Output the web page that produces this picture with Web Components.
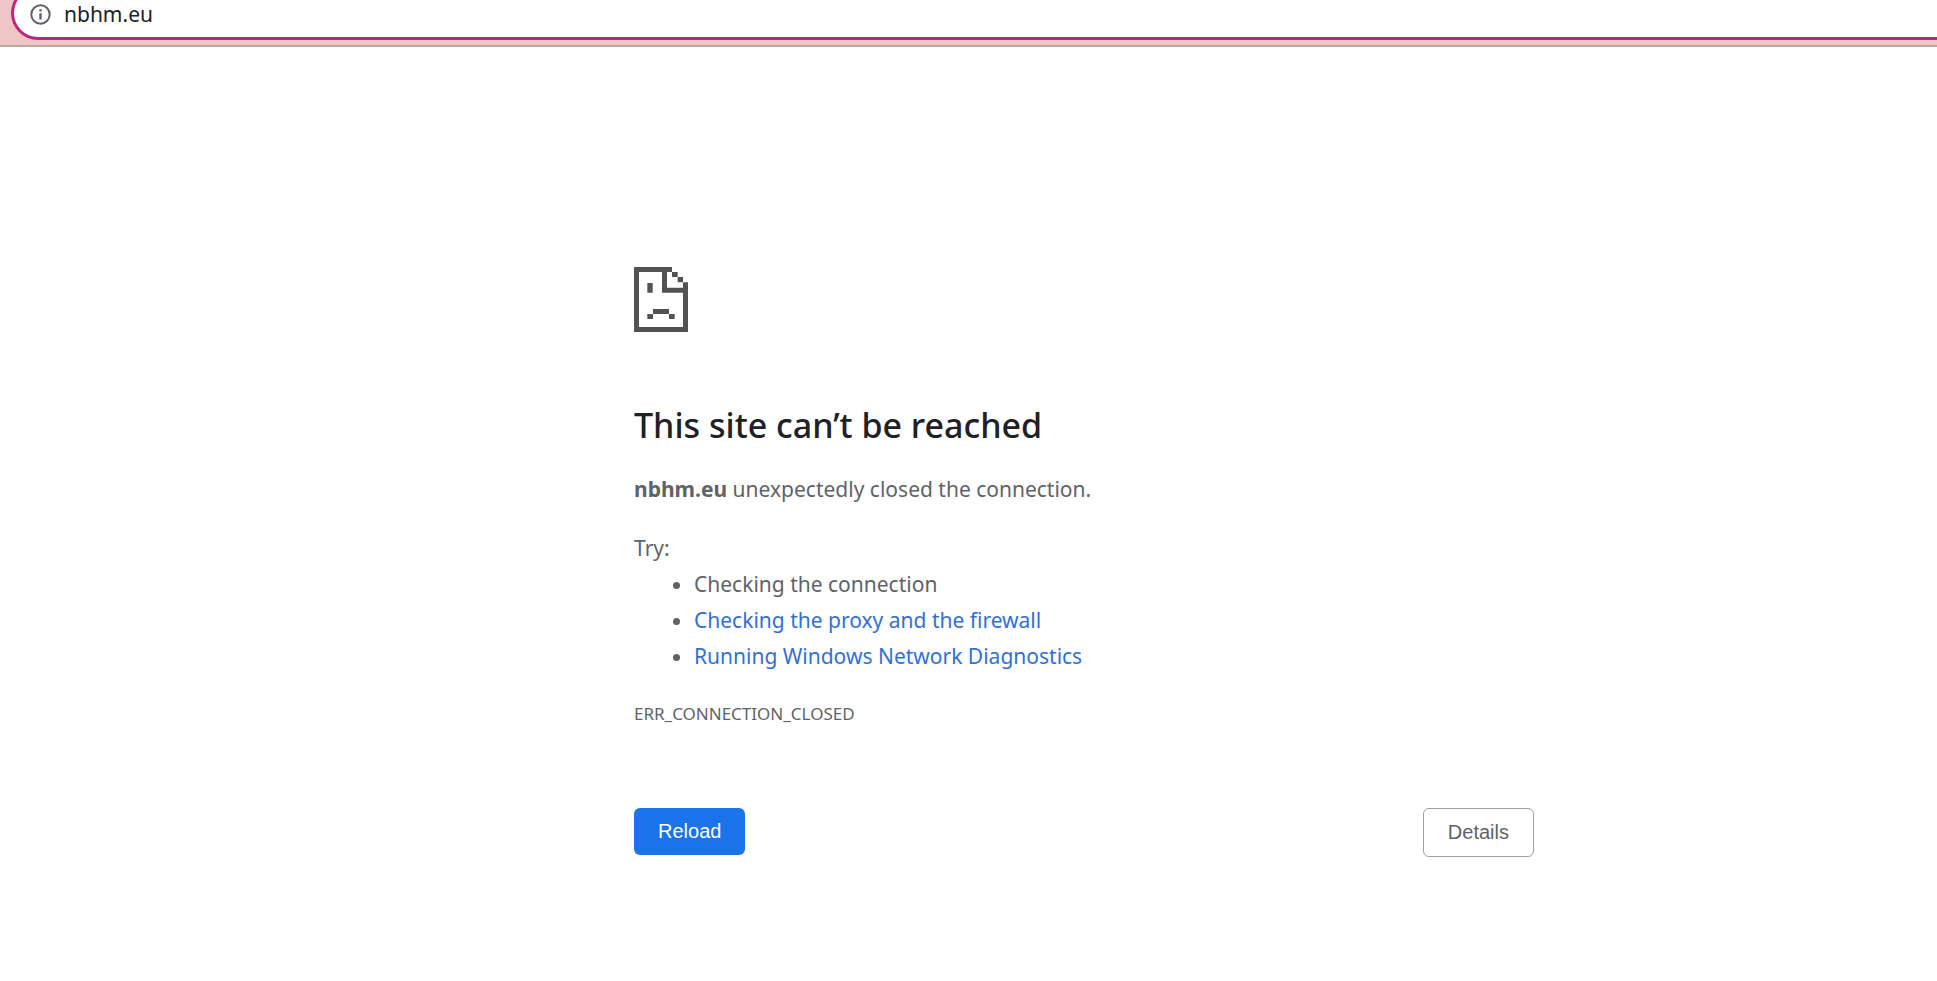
<!DOCTYPE html>
<html lang="en">
<head>
<meta charset="utf-8">
<title>nbhm.eu</title>
<style>
body { margin: 0; background: #fff; font-family: "Noto Sans", "Open Sans", sans-serif; color: #5f6368; }
</style>
</head>
<body>
<address-bar value="nbhm.eu"></address-bar>
<error-page>
  <sad-file slot="icon"></sad-file>
  <span slot="title">This site can’t be reached</span>
  <strong slot="host">nbhm.eu</strong>
  <span slot="summary">unexpectedly closed the connection.</span>
  <suggestion-list slot="suggestions"></suggestion-list>
  <span slot="code">ERR_CONNECTION_CLOSED</span>
  <action-button slot="actions" kind="primary">Reload</action-button>
  <action-button slot="actions" kind="secondary">Details</action-button>
</error-page>
<script>
class BaseElement extends HTMLElement {
  constructor() {
    super();
    this.attachShadow({ mode: "open" }).innerHTML = this.constructor.markup;
  }
}

class AddressBar extends BaseElement {
  static markup = `
    <style>
      :host { display: flex; box-sizing: border-box; height: 47px; padding: 0 0 5px 11px; background: #efc6c5; border-bottom: 2px solid #bda69b; overflow: hidden; }
      .field { box-sizing: border-box; display: flex; align-items: center; gap: 13px; flex: 1; height: 54px; margin-top: -14px; padding: 2px 0 0 16px; background: #fff; border: solid #bd2380; border-width: 3px 0 3px 3px; border-radius: 27px 0 0 27px; }
      svg { width: 21px; height: 21px; flex: none; }
      input { flex: 1; min-width: 0; height: 30px; padding: 0; border: 0; outline: 0; background: none; color: #202124; font: 21px/30px "Noto Sans", "Open Sans", sans-serif; }
    </style>
    <div class="field">
      <svg viewBox="0 0 21 21" aria-hidden="true"><circle cx="10.5" cy="10.5" r="9.2" fill="none" stroke="#5f6368" stroke-width="2"/><path d="M9.3 5.2h2.4v2.2h-2.4zM9.3 9.2h2.4v6.4h-2.4z" fill="#5f6368"/></svg>
      <input type="text" aria-label="Address">
    </div>`;
  connectedCallback() {
    this.shadowRoot.querySelector("input").value = this.getAttribute("value");
  }
}

class SadFile extends BaseElement {
  static markup = `
    <style>
      :host { display: block; }
      svg { display: block; width: 54px; height: 65px; }
    </style>
    <svg viewBox="0 0 162 195" fill="#525252" aria-hidden="true">
      <path d="M0 0H114V15H99V62H147V46H162V195H0zM15 15V180H147V77H84V15z" fill-rule="evenodd"/>
      <path d="M114 15h17v15h-17zM131 30h16v16h-16zM40 48h16v29H40zM57 126h48v15H57zM40 141h17v15H40zM105 141h17v15h-17z"/>
    </svg>`;
}

class SuggestionList extends BaseElement {
  static markup = `
    <style>
      :host { display: block; }
      p, ul { margin: 0; }
      ul { padding-left: 60px; }
      a { color: #3370d4; text-decoration: none; }
    </style>
    <p>Try:</p>
    <ul>
      <li>Checking the connection</li>
      <li><a href="#proxy">Checking the proxy and the firewall</a></li>
      <li><a href="#diagnostics">Running Windows Network Diagnostics</a></li>
    </ul>`;
}

class ActionButton extends BaseElement {
  static markup = `
    <style>
      :host { display: block; }
      button { box-sizing: border-box; height: 47px; padding: 0 24px 2px; border: 0; border-radius: 6px; background: #1a73e8; color: #fff; font: 20px/24px "Liberation Sans", Arial, sans-serif; }
      :host([kind="secondary"]) button { height: 49px; border: 1px solid #9aa0a6; background: #fff; color: #5f6368; }
    </style>
    <button type="button"><slot></slot></button>`;
}

class ErrorPage extends BaseElement {
  static markup = `
    <style>
      :host { display: block; padding: 220px 0 40px 231px; font-size: 21px; line-height: 36px; }
      main { max-width: 900px; margin: 0 auto; }
      h1 { margin: 68px 0 21px; color: #202124; font-size: 34px; font-weight: 500; line-height: 50px; }
      p { margin: 0 0 23px; }
      .code { margin: 22px 0 0; font-size: 17px; line-height: 36px; }
      footer { display: flex; justify-content: space-between; align-items: flex-start; margin-top: 76px; }
    </style>
    <main>
      <slot name="icon"></slot>
      <h1><slot name="title"></slot></h1>
      <p><slot name="host"></slot> <slot name="summary"></slot></p>
      <slot name="suggestions"></slot>
      <div class="code"><slot name="code"></slot></div>
      <footer><slot name="actions"></slot></footer>
    </main>`;
}

customElements.define("address-bar", AddressBar);
customElements.define("sad-file", SadFile);
customElements.define("suggestion-list", SuggestionList);
customElements.define("action-button", ActionButton);
customElements.define("error-page", ErrorPage);
</script>
</body>
</html>
